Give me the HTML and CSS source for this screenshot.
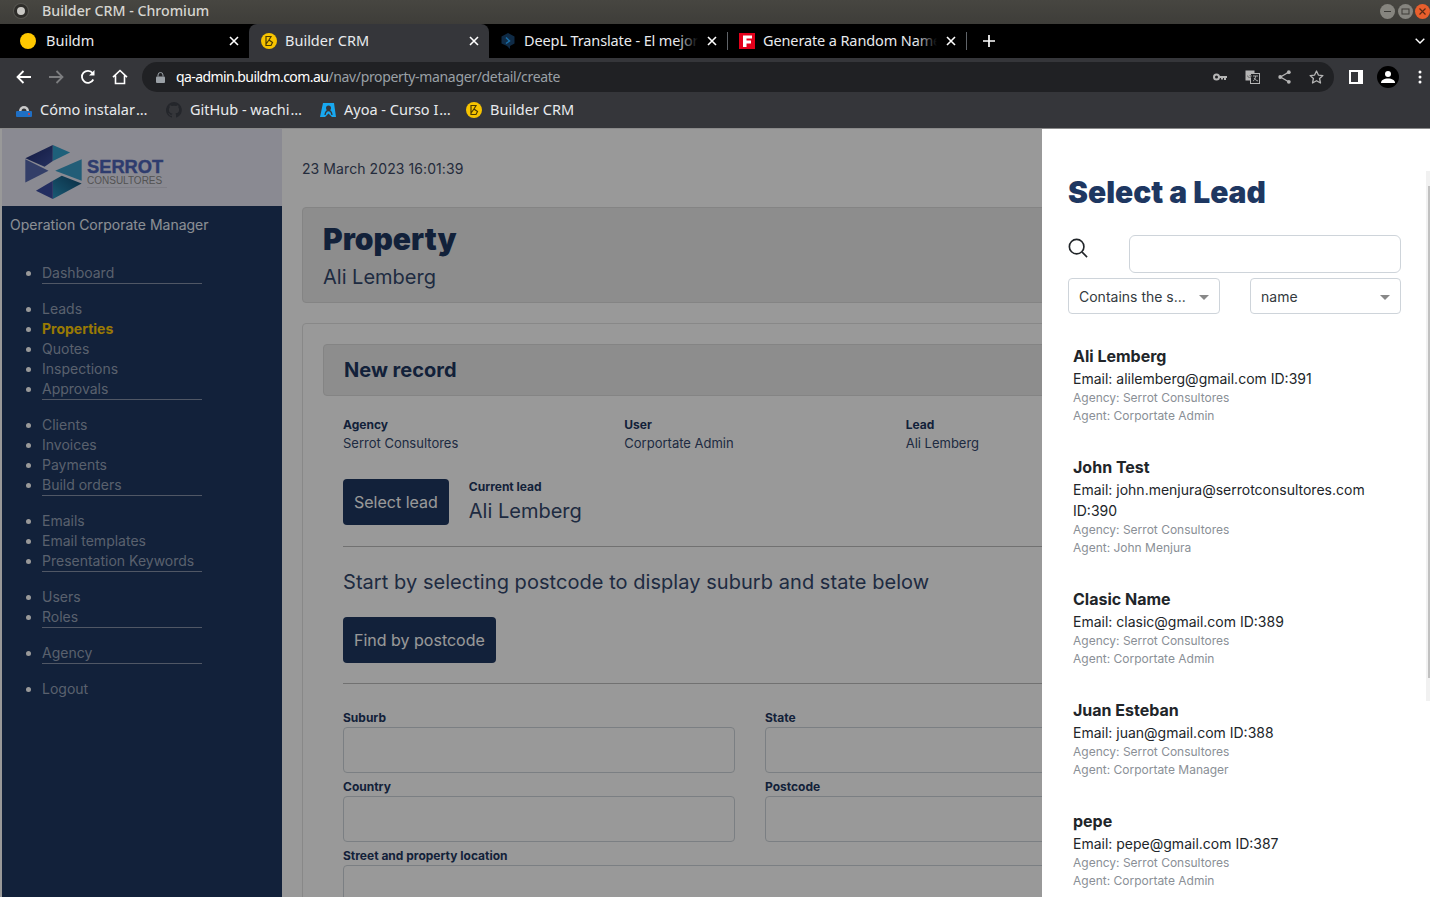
FILE: index.html
```html
<!DOCTYPE html>
<html lang="en">
<head>
<meta charset="utf-8">
<title>Builder CRM - Chromium</title>
<link rel="stylesheet" href="styles.css">
</head>
<body>
<div class="window">
  <header class="titlebar">
    <span class="app-dot"></span>
    <span class="title-text">Builder CRM - Chromium</span>
    <div class="win-btns">
      <span class="win-btn"><svg width="9" height="9" viewBox="0 0 9 9"><path d="M1 4.5h7" stroke="#3c3b37" stroke-width="1"/></svg></span>
      <span class="win-btn"><svg width="9" height="9" viewBox="0 0 9 9"><rect x="1" y="2" width="7" height="5" fill="none" stroke="#3c3b37"/></svg></span>
      <span class="win-btn close"><svg width="9" height="9" viewBox="0 0 9 9"><path d="M1.5 1.5l6 6M7.5 1.5l-6 6" stroke="#5a2a14" stroke-width="1.2"/></svg></span>
    </div>
  </header>

  <nav class="tabstrip">
    <div class="tab first">
      <span class="fav-dot"></span>
      <span class="tab-title">Buildm</span>
      <svg class="tab-x" width="10" height="10" viewBox="0 0 10 10"><path d="M1 1l8 8M9 1l-8 8" stroke="#fff" stroke-width="1.6"/></svg>
    </div>
    <div class="tab active">
      <svg class="fav" width="16" height="16" viewBox="0 0 16 16"><circle cx="8" cy="8" r="8" fill="#f7c400"/><path d="M5 3.500h5l-2 3.500 3.500 2.500-1.500 3H5zM8 7L5 11" fill="none" stroke="#4a3a00" stroke-width="1.2"/></svg>
      <span class="tab-title">Builder CRM</span>
      <svg class="tab-x" width="10" height="10" viewBox="0 0 10 10"><path d="M1 1l8 8M9 1l-8 8" stroke="#fff" stroke-width="1.6"/></svg>
    </div>
    <div class="tab sep">
      <svg class="fav" width="16" height="16" viewBox="0 0 16 16"><path d="M8 0l6.500 3.500v7L10 13v3l-3-3-5.500-2.500v-7z" fill="#0f2b46"/><path d="M6 4.500l3.500 3.500L6 10.500" fill="none" stroke="#1b6fa8" stroke-width="1.500"/></svg>
      <span class="tab-title">DeepL Translate - El mejor</span>
      <svg class="tab-x" width="10" height="10" viewBox="0 0 10 10"><path d="M1 1l8 8M9 1l-8 8" stroke="#fff" stroke-width="1.6"/></svg>
    </div>
    <div class="tab sep">
      <svg class="fav" width="16" height="16" viewBox="0 0 16 16"><rect width="16" height="16" fill="#e3001b"/><path d="M4 2.500h9v3H7.500v2H12v3H7.500v3.500H4z" fill="#fff"/></svg>
      <span class="tab-title">Generate a Random Name</span>
      <svg class="tab-x" width="10" height="10" viewBox="0 0 10 10"><path d="M1 1l8 8M9 1l-8 8" stroke="#fff" stroke-width="1.6"/></svg>
    </div>
    <svg class="new-tab" width="12" height="12" viewBox="0 0 12 12"><path d="M6 0v12M0 6h12" stroke="#fff" stroke-width="1.700"/></svg>
    <svg class="tab-menu" width="10" height="6" viewBox="0 0 10 6"><path d="M.7.7L5 5l4.300-4.300" fill="none" stroke="#fff" stroke-width="1.400"/></svg>
  </nav>

  <div class="toolbar">
    <svg class="tool back" width="16" height="14" viewBox="0 0 16 14"><path d="M15 7H2M7.500 1L1.500 7l6 6" fill="none" stroke="#fff" stroke-width="1.800"/></svg>
    <svg class="tool fwd" width="16" height="14" viewBox="0 0 16 14"><path d="M1 7h13M8.500 1l6 6-6 6" fill="none" stroke="#7d7e80" stroke-width="1.800"/></svg>
    <svg class="tool reload" width="16" height="16" viewBox="0 0 16 16"><path d="M13.300 10.500A6 6 0 1 1 12.600 4" fill="none" stroke="#fff" stroke-width="1.800"/><path d="M14.500 1v5.500H9z" fill="#fff"/></svg>
    <svg class="tool home" width="16" height="16" viewBox="0 0 16 16"><path d="M1 8.200L8 1.500l7 6.700M3.500 6.500v8h9v-8" fill="none" stroke="#fff" stroke-width="1.600"/></svg>
    <div class="omnibox">
      <svg class="lock" width="9" height="11" viewBox="0 0 9 11"><path d="M2 4.500V3a2.500 2.500 0 0 1 5 0v1.500" fill="none" stroke="#9aa0a6" stroke-width="1"/><rect y="4.500" width="9" height="6.500" rx="1" fill="#9aa0a6"/></svg>
      <span class="url"><span class="host">qa-admin.buildm.com.au</span>/nav/property-manager/detail/create</span>
      <div class="omni-icons">
        <svg width="14" height="8" viewBox="0 0 14 8"><circle cx="3.500" cy="4" r="2.500" fill="none" stroke="#b5b5b5" stroke-width="2"/><path d="M6 3h8v2h-1v2h-2V5h-1v1.500H8V5H6z" fill="#b5b5b5"/></svg>
        <svg width="15" height="14" viewBox="0 0 15 14"><rect x=".5" y=".5" width="9" height="10" fill="#b5b5b5"/><rect x="5.500" y="3.500" width="9" height="10" fill="#202124" stroke="#b5b5b5"/><path d="M2.500 5.500a2 2 0 1 0 4 0h-2" fill="none" stroke="#6a6a6a" stroke-width=".9"/><path d="M8 6h5M10.500 6c0 3-1.500 4.500-2.500 5M9 8c1 1.500 2.500 2.500 4 3" fill="none" stroke="#b5b5b5" stroke-width=".9"/></svg>
        <svg width="13" height="14" viewBox="0 0 13 14"><path d="M11 2L2.500 7l8.500 5" fill="none" stroke="#b5b5b5" stroke-width="1.300"/><circle cx="10.800" cy="2.200" r="1.900" fill="#b5b5b5"/><circle cx="2.200" cy="7" r="1.900" fill="#b5b5b5"/><circle cx="10.800" cy="11.800" r="1.900" fill="#b5b5b5"/></svg>
        <svg width="15" height="14" viewBox="0 0 15 14"><path d="M7.500 1l1.900 4.100 4.500.500-3.300 3 .9 4.400-4-2.300-4 2.300.9-4.400-3.300-3 4.500-.500z" fill="none" stroke="#b5b5b5" stroke-width="1.300" stroke-linejoin="round"/></svg>
      </div>
    </div>
    <svg class="tool panel-ic" width="14" height="14" viewBox="0 0 14 14"><path d="M0 0h14v14H0zM2 2v10h7V2z" fill="#fff" fill-rule="evenodd"/></svg>
    <span class="avatar"><svg width="14" height="12" viewBox="0 0 14 12"><circle cx="7" cy="3" r="3" fill="#fff"/><path d="M0 12c0-3 3-4.500 7-4.500S14 9 14 12z" fill="#fff"/></svg></span>
    <svg class="tool dots" width="4" height="14" viewBox="0 0 4 14"><circle cx="2" cy="2" r="1.500" fill="#fff"/><circle cx="2" cy="7" r="1.500" fill="#fff"/><circle cx="2" cy="12" r="1.500" fill="#fff"/></svg>
  </div>

  <div class="bookmarks">
    <a class="bm bm1"><svg width="16" height="15" viewBox="0 0 16 15"><path d="M3 8a5 5 0 0 1 10 0z" fill="#c9c9c9"/><path d="M5.500 8a2.500 2.500 0 0 1 5 0z" fill="#35363a"/><rect y="8" width="16" height="6" rx="1" fill="#1f6fc4"/><circle cx="13" cy="11" r="1" fill="#e33"/></svg><span>Cómo instalar<i class="ell">…</i></span></a>
    <a class="bm bm2"><svg width="16" height="16" viewBox="0 0 16 16"><path d="M8 0a8 8 0 0 0-2.500 15.600c.4.100.5-.2.500-.4v-1.400c-2.200.5-2.700-1-2.700-1-.4-.9-.9-1.200-.9-1.200-.7-.5.100-.5.100-.5.800.100 1.200.8 1.200.8.700 1.200 1.900.9 2.300.7.100-.5.300-.9.500-1.100-1.800-.2-3.600-.9-3.600-4 0-.9.300-1.600.8-2.100-.1-.2-.4-1 .1-2.100 0 0 .7-.2 2.200.8a7.600 7.600 0 0 1 4 0c1.500-1 2.200-.8 2.200-.8.500 1.100.2 1.900.1 2.100.5.600.8 1.300.8 2.100 0 3.100-1.900 3.700-3.700 3.900.3.300.6.800.6 1.500v2.200c0 .2.100.5.600.4A8 8 0 0 0 8 0z" fill="#24262b"/></svg><span>GitHub - wachi<i class="ell">…</i></span></a>
    <a class="bm bm3"><svg width="16" height="16" viewBox="0 0 16 16"><path d="M3 1h11l2 14h-4l-3.500-3.500L5 15H0z" fill="#18a8f0"/><circle cx="8.500" cy="6" r="2.500" fill="#35363a"/><path d="M5 13c.5-3 2-4.500 3.500-4.500s3 1.500 3.500 4.500" fill="none" stroke="#35363a" stroke-width="1.300"/></svg><span>Ayoa - Curso I<i class="ell">…</i></span></a>
    <a class="bm"><svg width="16" height="16" viewBox="0 0 16 16"><circle cx="8" cy="8" r="8" fill="#f7c400"/><path d="M5 3.500h5l-2 3.500 3.500 2.500-1.500 3H5zM8 7L5 11" fill="none" stroke="#4a3a00" stroke-width="1.200"/></svg><span>Builder CRM</span></a>
  </div>

  <div class="page">
    <aside class="sidebar">
      <div class="brand">
        <svg class="brand-mark" width="57" height="54" viewBox="30 32 170 163">
          <defs>
            <linearGradient id="navy" x1="0" y1="0" x2="1" y2="1"><stop offset="0" stop-color="#1f2a6b"/><stop offset="1" stop-color="#3f52a0"/></linearGradient>
            <linearGradient id="teal" x1="0" y1="1" x2="1" y2="0"><stop offset="0" stop-color="#2a96c2"/><stop offset="1" stop-color="#12496e"/></linearGradient>
          </defs>
          <path d="M30 72L113 32v48L88 98z" fill="url(#navy)"/>
          <path d="M113 32l52 23-52 25z" fill="#32a0cc"/>
          <path d="M30 75l70 35-70 35z" fill="#5568ae"/>
          <path d="M200 75v65l-80-30z" fill="#3a9cc6"/>
          <path d="M113 195v-55l27-15 60 23z" fill="url(#teal)"/>
          <path d="M113 195l-51-25 51-30z" fill="#3a4ba0"/>
        </svg>
        <div class="brand-text">
          <span class="brand-name">SERROT</span>
          <span class="brand-sub">CONSULTORES</span>
        </div>
      </div>
      <div class="role">Operation Corporate Manager</div>
      <ul class="menu">
        <li>Dashboard</li>
      </ul>
      <ul class="menu">
        <li>Leads</li>
        <li class="current">Properties</li>
        <li>Quotes</li>
        <li>Inspections</li>
        <li>Approvals</li>
      </ul>
      <ul class="menu">
        <li>Clients</li>
        <li>Invoices</li>
        <li>Payments</li>
        <li>Build orders</li>
      </ul>
      <ul class="menu">
        <li>Emails</li>
        <li>Email templates</li>
        <li>Presentation Keywords</li>
      </ul>
      <ul class="menu">
        <li>Users</li>
        <li>Roles</li>
      </ul>
      <ul class="menu">
        <li>Agency</li>
      </ul>
      <ul class="menu plain">
        <li>Logout</li>
      </ul>
    </aside>

    <main class="main">
      <div class="date">23 March 2023 16:01:39</div>
      <section class="page-head">
        <h1>Property</h1>
        <p>Ali Lemberg</p>
      </section>
      <section class="card">
        <h2 class="card-head">New record</h2>
        <div class="body">
          <div class="meta">
            <div><b>Agency</b><span>Serrot Consultores</span></div>
            <div><b>User</b><span>Corportate Admin</span></div>
            <div><b>Lead</b><span>Ali Lemberg</span></div>
          </div>
          <div class="lead-row">
            <button class="btn">Select lead</button>
            <div class="current-lead"><b>Current lead</b><span>Ali Lemberg</span></div>
          </div>
          <hr class="rule">
          <p class="hint">Start by selecting postcode to display suburb and state below</p>
          <button class="btn">Find by postcode</button>
          <hr class="rule second">
          <div class="fields">
            <label class="field"><b>Suburb</b><span class="input"></span></label>
            <label class="field"><b>State</b><span class="input"></span></label>
            <label class="field"><b>Country</b><span class="input"></span></label>
            <label class="field"><b>Postcode</b><span class="input"></span></label>
            <label class="field wide"><b>Street and property location</b><span class="input"></span></label>
          </div>
        </div>
      </section>
    </main>

    <div class="overlay"></div>

    <aside class="drawer">
      <h2 class="drawer-title">Select a Lead</h2>
      <div class="search-row">
        <svg class="search-ic" width="20" height="20" viewBox="0 0 22 22"><circle cx="9.500" cy="9.500" r="8" fill="none" stroke="#212529" stroke-width="1.800"/><path d="M15.500 15.500l5.500 5.500" stroke="#212529" stroke-width="1.800"/></svg>
        <span class="search-input"></span>
      </div>
      <div class="filter-row">
        <div class="select first-select">Contains the s...<i class="caret"></i></div>
        <div class="select second-select">name<i class="caret"></i></div>
      </div>
      <div class="leads">
        <article class="lead"><h3>Ali Lemberg</h3><p class="email">Email: alilemberg@gmail.com ID:391</p><p class="sub">Agency: Serrot Consultores</p><p class="sub">Agent: Corportate Admin</p></article>
        <article class="lead"><h3>John Test</h3><p class="email">Email: john.menjura@serrotconsultores.com ID:390</p><p class="sub">Agency: Serrot Consultores</p><p class="sub">Agent: John Menjura</p></article>
        <article class="lead"><h3>Clasic Name</h3><p class="email">Email: clasic@gmail.com ID:389</p><p class="sub">Agency: Serrot Consultores</p><p class="sub">Agent: Corportate Admin</p></article>
        <article class="lead"><h3>Juan Esteban</h3><p class="email">Email: juan@gmail.com ID:388</p><p class="sub">Agency: Serrot Consultores</p><p class="sub">Agent: Corportate Manager</p></article>
        <article class="lead"><h3>pepe</h3><p class="email">Email: pepe@gmail.com ID:387</p><p class="sub">Agency: Serrot Consultores</p><p class="sub">Agent: Corportate Admin</p></article>
      </div>
      <div class="scroll-track"><span class="scroll-thumb"></span></div>
    </aside>
  </div>
</div>
</body>
</html>
```

FILE: styles.css
```css
* { box-sizing: border-box; }
html, body { margin: 0; height: 100%; overflow: hidden; }
body { background: #3a3935; font-family: Inter, "Liberation Sans", sans-serif; }
.window { width: 1430px; height: 897px; display: flex; flex-direction: column; overflow: hidden; }

/* Title bar */
.titlebar { height: 24px; flex: none; display: flex; align-items: center; padding: 0 0 2px 14px; background: linear-gradient(#474641, #3e3d39); font: 500 14.200px "Noto Sans", sans-serif; color: #d6d5d0; }
.app-dot { width: 14px; height: 14px; border-radius: 50%; background: #c9c8c4; border: 3.500px solid #2e2d2a; box-shadow: 0 0 0 1px #55544f; }
.title-text { margin: 0 0 2px 14px; }
.win-btns { margin-left: auto; display: flex; gap: 2.500px; }
.win-btn { width: 15px; height: 15px; border-radius: 50%; background: #86857f; display: flex; align-items: center; justify-content: center; }
.win-btn.close { background: #e95f2c; }

/* Tabs */
.tabstrip { height: 34px; flex: none; display: flex; align-items: center; background: #000; padding-left: 2px; color: #e8eaed; font: 14.500px "Noto Sans", sans-serif; }
.tab { width: 240px; height: 34px; flex: none; display: flex; align-items: center; padding-left: 12px; padding-right: 10px; position: relative; }
.tab.first { width: 247px; }
.tab.active { background: #35363a; border-radius: 8px 8px 0 0; }
.tab.sep { width: 239px; padding-left: 11px; padding-right: 11px; letter-spacing: -.12px; }
.tab.sep::before { content: ""; position: absolute; right: 21px; top: 6px; bottom: 6px; width: 30px; background: linear-gradient(90deg, transparent, #000 70%); }
.tab.sep::after { content: ""; position: absolute; right: 0; top: 8px; bottom: 8px; width: 1px; background: #5f6368; }
.fav-dot { width: 16px; height: 16px; border-radius: 50%; background: #ffc800; margin-left: 6px; flex: none; }
.tab.first .tab-title { margin-left: 10px; }
.fav { flex: none; }
.tab-title { margin: 0 0 2px 8px; flex: 1; white-space: nowrap; }
.tab-x { flex: none; margin-left: 4px; position: relative; }
.new-tab { margin-left: 16px; flex: none; }
.tab-menu { margin-left: auto; margin-right: 5px; flex: none; }

/* Toolbar */
.toolbar { height: 34px; flex: none; display: flex; align-items: center; background: #35363a; }
.tool { flex: none; margin-top: 4px; }
.back { margin-left: 16px; }
.fwd { margin-left: 16px; }
.reload { margin-left: 16px; }
.home { margin-left: 16px; }
.omnibox { margin: 4px 0 0 14px; width: 1192px; height: 30px; border-radius: 15px; background: #202124; display: flex; align-items: center; padding-left: 14px; font: 14px "Noto Sans", sans-serif; color: #9aa0a6; flex: none; }
.lock { flex: none; }
.url { margin: 0 0 2px 11px; letter-spacing: -.33px; white-space: nowrap; }
.host { color: #fff; letter-spacing: -.58px; }
.omni-icons { margin-left: auto; margin-right: 2px; display: grid; grid-template-columns: repeat(4, 32px); align-items: center; justify-items: center; }
.panel-ic { margin-left: 15px; }
.avatar { width: 22px; height: 22px; border-radius: 50%; background: #000; margin: 4px 0 0 14px; display: flex; align-items: center; justify-content: center; flex: none; }
.dots { margin-left: 19px; }

/* Bookmarks */
.bookmarks { height: 37px; flex: none; display: flex; align-items: center; padding-left: 16px; background: #35363a; border-bottom: 1px solid #8a8a8a; color: #e8eaed; font: 14.500px "Noto Sans", sans-serif; }
.bm { display: flex; align-items: center; gap: 8px; white-space: nowrap; }
.bm span { margin-bottom: 2px; }
.bm1 { width: 150px; }
.bm2 { width: 154px; }
.bm3 { width: 146px; }
.ell { font-style: normal; margin-left: 1px; letter-spacing: 1px; }

/* Page */
.page { flex: 1; position: relative; display: flex; min-height: 0; overflow: hidden; padding-left: 2px; background: #fff; }
.sidebar { width: 280px; flex: none; background: #1e3761; color: #fff; font-family: Inter, sans-serif; }
.brand { height: 77px; padding: 16px 0 0 23px; background: #e6e6f4; display: flex; align-items: flex-start; }
.brand-mark { flex: none; }
.brand-text { margin: 12px 0 0 5px; display: flex; flex-direction: column; border-bottom: 1px solid #d4d4e2; height: 31px; width: 80px; }
.brand-name { font: 700 18.300px/19px "Liberation Sans", sans-serif; color: #4e64b7; -webkit-text-stroke: .4px #4e64b7; }
.brand-sub { font: 10px/10px "Liberation Sans", sans-serif; color: #8a8a8a; }
.role { padding: 9px 8px 0; font-size: 14px; line-height: 20px; color: #e8eef7; }
.menu { margin: 0 0 15px; padding: 0 0 0 40px; width: 200px; font-size: 14px; line-height: 20px; color: #96a2b7; }
.menu:first-of-type { margin-top: 28px; }
.menu li { height: 20px; }
.menu li::marker { color: #fff; }
.menu li:last-child { height: 21px; border-bottom: 1px solid #8592a8; }
.menu.plain li:last-child { border-bottom: 0; }
.current { color: #ffcb05; font-weight: 700; }

.main { flex: none; width: 915px; padding: 29px 0 0 20px; background: #fff; color: #1e3761; }
.date { font-size: 14px; line-height: 21px; letter-spacing: .08px; color: #3d4a66; }
.page-head { margin-top: 28px; height: 96px; padding: 13px 20px 0; background: #ebebeb; border: 1px solid #dcdcdc; border-radius: 4px; width: 894px; }
.page-head h1 { margin: 0; font-size: 30px; line-height: 36px; font-weight: 900; }
.page-head p { margin: 3px 0 0; font-size: 20px; line-height: 34px; color: #34486d; }
.card { margin-top: 20px; width: 894px; padding: 20px 20px; border: 1px solid #e3e3e3; border-radius: 4px; }
.card-head { margin: 0; height: 52px; padding: 0 20px; display: flex; align-items: center; background: #ebebeb; border: 1px solid #dcdcdc; border-radius: 4px; font-size: 20px; font-weight: 700; }
.body { padding: 20px 20px 0; }
.meta { display: grid; grid-template-columns: repeat(3, 281.330px); font-size: 13px; }
.meta b { display: block; font-size: 12px; line-height: 18px; }
.meta span { display: block; line-height: 20px; margin-top: -1px; color: #34486d; }
.lead-row { margin-top: 26px; display: flex; align-items: flex-start; gap: 20px; }
.btn { height: 46px; padding: 0 11px; background: #1e3761; color: #fff; border: 0; border-radius: 4px; font: 16px Inter, sans-serif; display: block; }
.current-lead { display: flex; flex-direction: column; }
.current-lead b { font-size: 12px; line-height: 16px; }
.current-lead span { font-size: 20px; line-height: 32px; color: #34486d; }
.rule { margin: 19px 0 0; border: 0; border-top: 1px solid #bdbdbd; width: 814px; }
.hint { margin: 23px 0 23px; font-size: 20px; line-height: 24px; letter-spacing: .05px; color: #34486d; }
.rule.second { margin-top: 20px; }
.fields { margin-top: 26px; display: grid; grid-template-columns: 392px 392px; column-gap: 30px; row-gap: 6px; }
.field { display: flex; flex-direction: column; font-size: 12px; }
.field b { line-height: 16px; margin-bottom: 1px; display: block; }
.input { height: 46px; border: 1px solid #ced4da; border-radius: 4px; display: block; }
.wide { grid-column: 1 / 3; }

.overlay { position: absolute; inset: 0; background: rgba(0, 0, 0, .4); }

/* Drawer */
.drawer { position: absolute; top: 0; right: 0; bottom: 0; width: 388px; background: #fff; padding: 41px 0 0 26px; overflow: hidden; }
.drawer-title { margin: 0; font-size: 30px; line-height: 44px; font-weight: 900; color: #1e3761; }
.search-row { margin-top: 21px; display: flex; align-items: flex-start; }
.search-ic { margin-top: 3px; flex: none; }
.search-input { margin-left: 41px; width: 272px; height: 38px; border: 1px solid #ced4da; border-radius: 6px; display: block; }
.filter-row { margin-top: 5px; display: flex; gap: 30px; }
.select { height: 36px; border: 1px solid #ced4da; border-radius: 4px; display: flex; align-items: center; padding-left: 10px; font-size: 14px; color: #343a40; position: relative; }
.first-select { width: 152px; }
.second-select { width: 151px; }
.caret { position: absolute; right: 10px; top: 16px; border: 5px solid transparent; border-top-color: #888; border-bottom: 0; }
.leads { margin-top: 32px; padding-left: 5px; width: 306px; color: #212529; }
.lead { margin-bottom: 32px; }
.lead h3 { margin: 0; font-size: 16px; line-height: 21px; padding-bottom: 1px; font-weight: 700; }
.email { margin: 0; font-size: 14px; line-height: 21px; }
.sub { margin: 0; font-size: 12px; line-height: 18px; color: #8a8f96; }
.scroll-track { position: absolute; top: 42px; right: 0; width: 4px; height: 530px; background: #f1f1f1; }
.scroll-thumb { position: absolute; top: 15px; right: 0; width: 2px; height: 492px; background: #c1c1c1; }
```
